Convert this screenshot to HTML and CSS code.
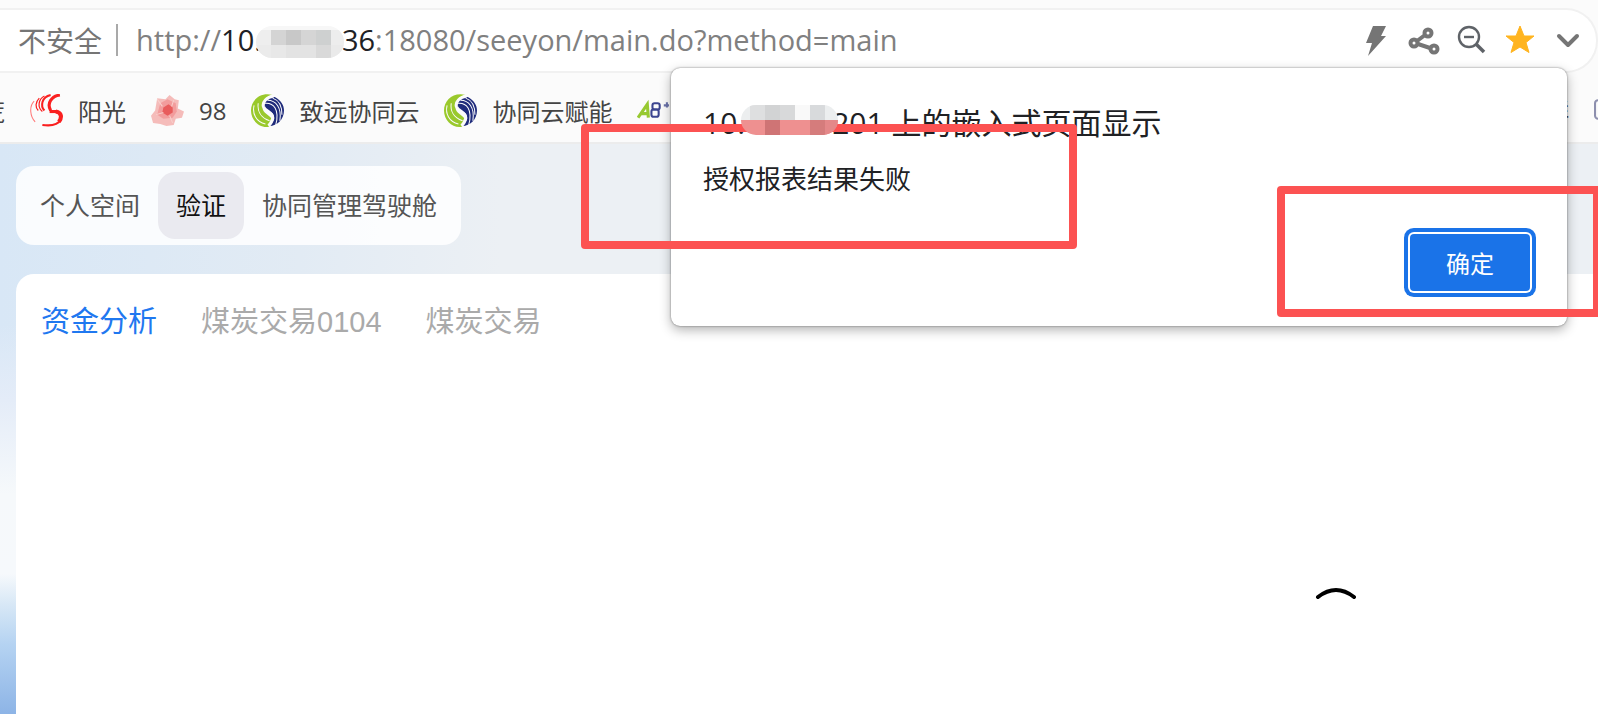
FILE: index.html
```html
<!DOCTYPE html>
<html lang="zh-CN">
<head>
    <meta charset="utf-8" />
    <title>协同管理</title>
    <link rel="stylesheet" href="styles.css">
</head>

<body>
<svg class="defs" width="0" height="0" aria-hidden="true">
    <symbol id="seeyon" viewBox="0 0 32 32">
        <path fill="#9ac92c" d="M21 1C9-2 0 6 0 16c0 9 7 16 15 16 4 0 7-4 5-8-2-4-9-5-9-12 0-5 4-10 10-11z"/>
        <path fill="none" stroke="#fbfbfb" d="M7 9C6 16 9 23 18 26M3 11C1 19 5 27 14 29"/>
        <path fill="#1f2b7b" d="M12 11c0-5 5-9 11-8 6 3 9 8 9 13 0 9-7 15-14 15 4-3 6-8 3-12-3-3-9-3-9-8z"/>
        <path fill="none" stroke="#fbfbfb" d="M13 9c9-1 15 6 11 21M16 6c8 0 14 7 12 20M21 4c6 2 9 7 9 16"/>
        <path fill="none" stroke="#fbfbfb" stroke-width="3" d="M22 2c-7 1-11 6-10 10 2 6 10 5 9 12-1 3-2 5-4 7"/>
    </symbol>
</svg>

<header class="browser">
    <div class="address">
        <span class="unsafe">不安全</span>
        <span class="divider"></span>
        <div class="url"><span>http://</span><b>10.</b><svg class="mosaic" viewBox="0 0 88 32">
                <clipPath id="c1"><rect width="88" height="32" rx="16"/></clipPath>
                <g clip-path="url(#c1)" shape-rendering="crispEdges">
                    <rect width="88" height="32" fill="#f7f7f7"/>
                    <rect y="4" width="15" height="15" fill="#eee"/><rect x="15" y="4" width="15" height="15" fill="#d4d4d4"/><rect x="30" y="4" width="15" height="15" fill="#c8c8c8"/><rect x="45" y="4" width="15" height="15" fill="#d5d5d5"/><rect x="60" y="4" width="15" height="15" fill="#ced0d0"/><rect x="75" y="4" width="13" height="15" fill="#ededed"/>
                    <rect y="19" width="15" height="13" fill="#ebebeb"/><rect x="15" y="19" width="15" height="13" fill="#e8e8e8"/><rect x="30" y="19" width="30" height="13" fill="#e3e3e3"/><rect x="60" y="19" width="15" height="13" fill="#d9d9d9"/><rect x="75" y="19" width="13" height="13" fill="#eaeaea"/>
                </g>
            </svg><b>36</b><span>:18080/seeyon/main.do?method=main</span></div>
        <div class="tools">
            <button class="tool" aria-label="加速"><svg viewBox="0 0 32 32"><path fill="#757575" d="M13 2h13l-5 10h5L8 32l4-13H6z"/></svg></button>
            <button class="tool" aria-label="分享"><svg viewBox="0 0 32 32"><g fill="none" stroke="#757575" stroke-width="4"><circle cx="6" cy="19" r="3.500"/><circle cx="20" cy="9" r="3.500"/><circle cx="26" cy="25" r="3.500"/><path d="M9 17l8-6M10 20l12 4"/></g></svg></button>
            <button class="tool" aria-label="缩小"><svg viewBox="0 0 32 32"><g fill="none" stroke="#5f6368"><circle cx="13" cy="13" r="10" stroke-width="2.4"/><path stroke-width="2.4" d="M8 13h10"/><path stroke-width="3.5" d="M20 20l8 8"/></g></svg></button>
            <button class="tool" aria-label="收藏"><svg viewBox="0 0 32 32"><path fill="#ffb41f" stroke="#ffb41f" stroke-width="1" stroke-linejoin="round" d="M16 2l4 10h10l-8 6.500 3 10L16 23l-9 5.500 3-10L2 12h10z"/></svg></button>
            <button class="tool" aria-label="展开"><svg viewBox="0 0 32 32"><path fill="none" stroke="#757575" stroke-width="4" stroke-linecap="round" stroke-linejoin="round" d="M7 12l9 9 9-9"/></svg></button>
        </div>
    </div>
    <nav class="bookmarks">
        <a href="#" class="cut">荒</a>
        <a href="#"><svg class="ico" viewBox="0 0 32 32">
            <g fill="none" stroke="#fa2020"><path stroke-width="1" stroke="#f77" d="M4 7C-1 12 0 22 5 27"/><path stroke-width="1.200" d="M9 4C5 8 5 13 8 16M14 2C8 5 7 13 12 17"/><path stroke-width="2" d="M20 1C11 3 10 12 14 16"/><path stroke-width="3" d="M29 1c-8 1-13 8-9 15"/><path stroke-width="3" d="M19 17h7"/><path stroke-width="4" d="M25 17c6 1 6 6 3 10"/><path stroke-width="2" d="M30 25c-3 5-11 6-18 5"/></g>
        </svg>阳光</a>
        <a href="#"><svg class="ico" viewBox="0 0 32 32">
            <g fill="#f5bcba"><path d="M6 4l8 1 4-4 5 4 4 1-1 8 6 3-2 6-6 1-2 6-7 1-6-2-7-1-2-7 4-5z"/></g>
            <path fill="#f29c9c" d="M9 9l7-4 8 4 1 8-4 6-9 1-6-4z"/><path fill="#e85c5c" d="M12 13l5-3 4 3v5l-5 3-5-3z"/><path fill="none" stroke="#f8cfcc" d="M6 5l5 7M22 6l-2 6M5 20l7-2M21 28l-3-7"/>
        </svg>98</a>
        <a href="#"><svg class="ico"><use href="#seeyon"/></svg>致远协同云</a>
        <a href="#"><svg class="ico"><use href="#seeyon"/></svg>协同云赋能</a>
        <a href="#"><svg class="ico" viewBox="0 0 32 32">
            <path fill="none" stroke="#97c931" stroke-width="3" d="M1 23L10 10l1 13M3 19h9"/>
            <g fill="none" stroke="#3c4590" stroke-width="2"><rect x="15" y="9" width="7" height="6" rx="2"/><rect x="14" y="15" width="7" height="7" rx="2"/></g>
            <path stroke="#6a72a8" stroke-width="2" d="M26 11h5M29 8v5"/>
        </svg></a>
        <a href="#" class="end">群</a>
        <a href="#" class="last"><svg class="ico" viewBox="0 0 32 32"><rect x="1" y="6" width="24" height="18" rx="3" fill="none" stroke="#8d8fae" stroke-width="2"/></svg></a>
    </nav>
</header>

<main class="portal">
    <nav class="spaces">
        <a href="#">个人空间</a>
        <a href="#" class="on">验证</a>
        <a href="#">协同管理驾驶舱</a>
    </nav>
    <section class="card">
        <nav class="tabs">
            <a href="#" class="on">资金分析</a>
            <a href="#">煤炭交易0104</a>
            <a href="#">煤炭交易</a>
        </nav>
        <div class="loading">
            <svg width="44" height="16" viewBox="0 0 44 16"><path fill="none" stroke="#000" stroke-width="4" stroke-linecap="round" d="M4 12Q22-2 40 12"/></svg>
        </div>
    </section>
</main>

<div class="dialog" role="alertdialog" aria-labelledby="dialogTitle">
    <h1 id="dialogTitle">10.<span class="hidden-ip"></span>201 上的嵌入式页面显示</h1>
    <p>授权报表结果失败</p>
    <div class="actions"><button class="ok">确定</button></div>
    <div class="mark mark-text"></div>
    <div class="mark mark-button"></div>
    <svg class="mosaic-title" viewBox="0 0 97 30">
        <clipPath id="c2"><rect width="97" height="30" rx="15"/></clipPath>
        <g clip-path="url(#c2)" shape-rendering="crispEdges">
            <rect width="97" height="15" fill="#eceeef"/><rect x="9" width="15" height="15" fill="#dedfe0"/><rect x="24" width="15" height="15" fill="#d2d3d4"/><rect x="39" width="15" height="15" fill="#d8d9da"/><rect x="54" width="15" height="15" fill="#f9f9f9"/><rect x="69" width="15" height="15" fill="#d8dadc"/>
            <rect y="15" width="97" height="15" fill="#ee9090"/><rect x="24" y="15" width="15" height="15" fill="#cf7475"/><rect x="69" y="15" width="15" height="15" fill="#d57c7c"/><rect x="84" y="15" width="13" height="15" fill="#e48889"/>
        </g>
    </svg>
</div>
</body>
</html>
```

FILE: styles.css
```css
* {box-sizing: border-box;}
body {margin: 0; min-height: 100vh; display: flex; flex-direction: column; overflow: hidden; position: relative; background-color: #fbfbfb; font-family: "Open Sans", "Noto Sans CJK SC", sans-serif;}
a {text-decoration: none; color: inherit; white-space: nowrap;}
button {border: none; padding: 0; background: none; font-family: inherit;}
.defs {position: absolute;}

/* browser bars */
.browser {padding-top: 8px; border-bottom: 2px solid #ececec;}
.address {display: flex; align-items: center; height: 65px; padding: 0 12px 2px 18px; background-color: #fff; border: 2px solid #f1f1f1; border-left: none; border-radius: 0 32px 32px 0; color: #757575; font-size: 28px;}
.unsafe {white-space: nowrap;}
.divider {width: 2px; height: 32px; margin: 0 18px 0 14px; background-color: #a9a9a9;}
.url {display: flex; align-items: center; flex: 1; white-space: nowrap; color: #808080; font-size: 29px;}
.url b {font-weight: normal; color: #202124;}
.mosaic {width: 88px; height: 32px; margin: 4px -2px 0 -6px;}
.tools {display: flex; gap: 16px;}
.tool {width: 32px; height: 32px;}
.tool svg {display: block; width: 32px; height: 32px;}
.bookmarks {display: flex; align-items: center; gap: 25px; height: 69px; padding-top: 6px; color: #444; font-size: 24px;}
.bookmarks a {display: flex; align-items: center; gap: 15px;}
.bookmarks .cut {width: 5px; justify-content: flex-end;}
.bookmarks .end {margin-left: auto;}
.bookmarks .last {width: 4px;}
.ico {width: 33px; height: 33px; flex: none;}

/* portal page */
.portal {flex: 1; display: flex; flex-direction: column; gap: 29px; padding: 22px 0 0 16px; background: linear-gradient(to bottom, rgba(246, 249, 252, 0) 180px, #e4ecf8 256px, #f6f9fb 350px, #f6f9fc 430px, #d8e8f6 460px, #b5d3f2 500px, #8db4e6 570px) 0 0 / 16px 100% no-repeat, linear-gradient(to right, #d8e7f6 0, #e2ebf4 300px, #ecf0f4 500px, #ecf0f4 100%);}
.spaces {display: flex; align-self: flex-start; padding: 6px; border-radius: 18px; background-color: rgba(255, 255, 255, 0.85); color: #555; font-size: 25px;}
.spaces a {padding: 0 18px; line-height: 67px; border-radius: 17px;}
.spaces .on {background-color: #eaeaf0; color: #111;}
.card {flex: 1; border-radius: 18px 0 0 0; background-color: #fff; font-family: "Liberation Sans", "Noto Sans CJK SC", sans-serif;}
.tabs {display: flex; gap: 44px; padding: 26px 25px; color: #aaa; font-size: 29px; line-height: 44px;}
.tabs .on {color: #1f78f0;}
.loading {display: flex; justify-content: flex-end; padding: 215px 240px 0 0;}

/* alert box, hangs over both bars */
.dialog {position: absolute; top: 68px; right: 31px; width: 896px; padding: 33px 37px 35px 32px; border-radius: 9px; background-color: #fff; box-shadow: 0 0 2px rgba(0, 0, 0, 0.5), 0 4px 12px rgba(0, 0, 0, 0.3); color: #202124;}
.dialog h1 {display: flex; align-items: center; margin: 0; white-space: pre; font-size: 30px; font-weight: normal; line-height: 44px;}
.hidden-ip {width: 87px;}
.dialog p {margin: 14px 0 0; font-size: 26px; line-height: 40px;}
.actions {display: flex; justify-content: flex-end; margin-top: 35px;}
.ok {width: 120px; height: 57px; border-radius: 4px; background-color: #1a73e8; box-shadow: 0 0 0 2px #fff, 0 0 0 6px #1a73e8; color: #fff; font-size: 24px;}
.mosaic-title {position: absolute; left: 70px; top: 37px; width: 97px; height: 30px;}

/* red frames */
.mark {position: absolute; border: 8px solid #fc5252; border-radius: 4px;}
.mark-text {left: -90px; top: 56px; width: 496px; height: 125px;}
.mark-button {left: 606px; top: 118px; width: 324px; height: 131px;}
```
